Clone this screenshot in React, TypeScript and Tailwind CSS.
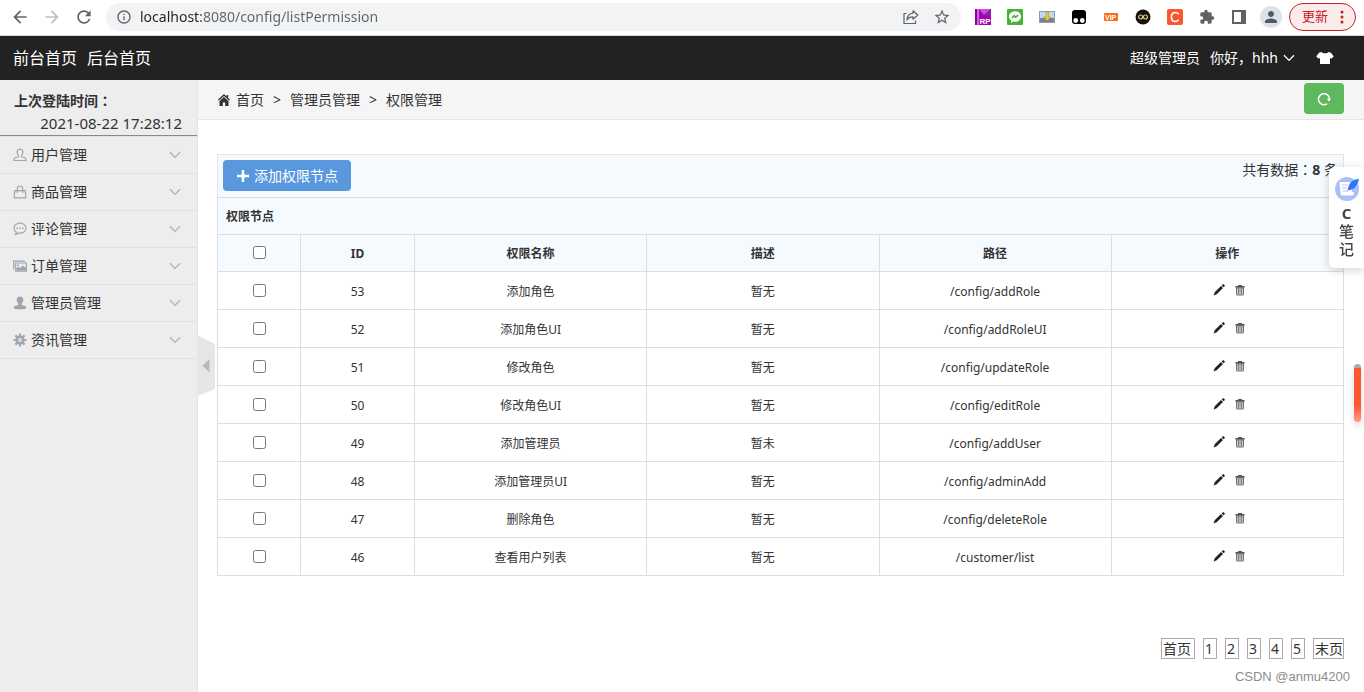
import type { ReactNode } from "react";
import {
  MdArrowBack,
  MdArrowForward,
  MdExtension,
  MdInfoOutline,
  MdPerson,
  MdRefresh,
  MdStarBorder,
} from "react-icons/md";

const permissions = [
  { id: 53, name: "添加角色", note: "暂无", path: "/config/addRole" },
  { id: 52, name: "添加角色UI", note: "暂无", path: "/config/addRoleUI" },
  { id: 51, name: "修改角色", note: "暂无", path: "/config/updateRole" },
  { id: 50, name: "修改角色UI", note: "暂无", path: "/config/editRole" },
  { id: 49, name: "添加管理员", note: "暂未", path: "/config/addUser" },
  { id: 48, name: "添加管理员UI", note: "暂无", path: "/config/adminAdd" },
  { id: 47, name: "删除角色", note: "暂无", path: "/config/deleteRole" },
  { id: 46, name: "查看用户列表", note: "暂无", path: "/customer/list" },
];

function Chevron({ className }: { className: string }) {
  return (
    <svg viewBox="0 0 12 8" className={className} fill="none" stroke="currentColor" strokeWidth="1.3" aria-hidden="true">
      <path d="M1 1.2 6 6.4 11 1.2" />
    </svg>
  );
}

/* Full-width punctuation centred in its em box. */
function Punct({ children }: { children: ReactNode }) {
  return <span className="font-['Noto_Sans_CJK_TC',sans-serif] leading-none">{children}</span>;
}

function MenuIcon({ children }: { children: ReactNode }) {
  return (
    <svg viewBox="0 0 14 14" className="h-3.5 w-3.5 shrink-0 text-[#a0a6b0]" fill="none" stroke="currentColor" strokeWidth="1.2" aria-hidden="true">
      {children}
    </svg>
  );
}

const menu: { label: string; icon: ReactNode }[] = [
  {
    label: "用户管理",
    icon: (
      <MenuIcon>
        <path d="M7 1.2c-1.9 0-2.9 1.3-2.9 3 0 1.3.6 2.6 1.4 3.3v1.2L2 10c-.8.4-1 1.3-1 2.5h12c0-1.2-.2-2.1-1-2.5L8.5 8.7V7.5c.8-.7 1.4-2 1.4-3.3 0-1.7-1-3-2.9-3Z" />
      </MenuIcon>
    ),
  },
  {
    label: "商品管理",
    icon: (
      <MenuIcon>
        <path d="M1.6 5.6h10.8l.4 7.3H1.2Z" />
        <path d="M4.3 8V3.7C4.3 2.1 5.3 1 7 1s2.7 1.1 2.7 2.7V8" />
      </MenuIcon>
    ),
  },
  {
    label: "评论管理",
    icon: (
      <MenuIcon>
        <path d="M7 1.2c3.4 0 6 2.2 6 5s-2.6 5-6 5c-.6 0-1.2-.1-1.7-.2-.8.9-1.7 1.4-2.9 1.5.5-.7.8-1.4.8-2.3C1.8 9.2 1 7.8 1 6.2c0-2.8 2.6-5 6-5Z" />
        <path d="M3.5 6.2H5M6.25 6.2h1.5M9 6.2h1.5" strokeWidth="1.6" />
      </MenuIcon>
    ),
  },
  {
    label: "订单管理",
    icon: (
      <MenuIcon>
        <path d="M.7 10.5V2.1H12" />
        <path d="M2.7 4h10.7v8.2H2.7Z" />
        <path d="M3.3 11.6V9.4l2-1.8L7 8.9l3-2.5L13 9v2.6Z" fill="currentColor" stroke="none" />
        <circle cx="5.1" cy="6.2" r=".9" fill="currentColor" stroke="none" />
      </MenuIcon>
    ),
  },
  {
    label: "管理员管理",
    icon: (
      <MenuIcon>
        <path d="M7 .6C4.8.6 3.7 2 3.7 4c0 1.5.7 3 1.7 3.8v.9L2.1 10c-.9.4-1.3 1.2-1.3 2.2 1.5 1.5 10.9 1.5 12.4 0 0-1-.4-1.8-1.3-2.2L8.6 8.7v-.9c1-.8 1.7-2.300 1.700-3.800C10.300 2 9.200.6 7 .6Z" fill="currentColor" stroke="none" />
      </MenuIcon>
    ),
  },
  {
    label: "资讯管理",
    icon: (
      <MenuIcon>
        <circle cx="7" cy="7" r="3.2" strokeWidth="2.6" />
        <path d="M7 .5v3M7 10.5v3M.5 7h3M10.5 7h3M2.4 2.4l2 2M9.6 9.6l2 2M11.6 2.4l-2 2M4.4 9.6l-2 2" strokeWidth="2.2" />
        <circle cx="7" cy="7" r=".8" fill="currentColor" stroke="none" />
      </MenuIcon>
    ),
  },
];

function Extensions() {
  return (
    <div className="flex items-center gap-4">
      <svg viewBox="0 0 16 16" className="h-4 w-4" role="img" aria-label="RP">
        <path d="M0 0h16v16H0Z" fill="#a800b8" />
        <path d="M4 0h12L9 6Z" fill="#c94fd8" />
        <path d="M16 0v8L9 6Z" fill="#8a1fa8" />
        <path d="M0 0h2v16H0Z" fill="#8b009c" />
        <path d="M2.5 0h1v16h-1Z" fill="#f3d4f7" />
        <text x="4.5" y="14.5" fontSize="8" fontWeight="700" fill="#fff" fontFamily="Liberation Sans, sans-serif">RP</text>
      </svg>
      <svg viewBox="0 0 16 16" className="h-4 w-4" aria-hidden="true">
        <rect width="16" height="16" rx="1" fill="#45b436" />
        <path d="M8 2.2c3.5 0 6 2.3 6 5.3s-2.5 5.3-6 5.3c-.6 0-1.1-.1-1.6-.2L4 14l.3-2.4C2.9 10.7 2 9.2 2 7.5c0-3 2.5-5.3 6-5.3Z" fill="#fff" />
        <path d="m5 8.9 2.2-2.3 1.5 1.7L11 6" fill="none" stroke="#45b436" strokeWidth="1.6" />
      </svg>
      <svg viewBox="0 0 16 16" className="h-4 w-4" aria-hidden="true">
        <path d="M0 2h16v12H0Z" fill="#9a9a9a" />
        <path d="M1 3h14v6H1Z" fill="#b9dcf3" />
        <path d="M1 9h14v4H1Z" fill="#6f8792" />
        <path d="M7 3h2.5v5H12l-3.800 3.800L4.500 8H7Z" fill="#f5c332" stroke="#bd8615" strokeWidth=".5" />
      </svg>
      <svg viewBox="0 0 16 16" className="h-4 w-4" aria-hidden="true">
        <rect x="1" y="1" width="14" height="14" rx="3" fill="#000" />
        <circle cx="4.7" cy="11.5" r="2.4" fill="#fff" />
        <circle cx="11.3" cy="11.5" r="2.4" fill="#fff" />
      </svg>
      <svg viewBox="0 0 16 16" className="h-4 w-4" role="img" aria-label="VIP">
        <rect x="1" y="4" width="14" height="8" rx="1" fill="#ff6a13" />
        <text x="2" y="10.5" fontSize="7" fontWeight="700" fill="#fff" fontFamily="Liberation Sans, sans-serif">VIP</text>
      </svg>
      <svg viewBox="0 0 16 16" className="h-4 w-4" aria-hidden="true">
        <circle cx="8" cy="8" r="7.5" fill="#141210" />
        <circle cx="5.6" cy="8" r="2" fill="none" stroke="#e3c583" strokeWidth="1.2" />
        <circle cx="10.4" cy="8" r="2" fill="none" stroke="#e3c583" strokeWidth="1.2" />
      </svg>
      <svg viewBox="0 0 16 16" className="h-4 w-4" aria-hidden="true">
        <rect width="16" height="16" rx="2" fill="#fc5531" />
        <path d="M11.7 5.2C10.9 4 9.8 3.5 8.5 3.5 6 3.5 4.4 5.3 4.4 8s1.5 4.5 4 4.5c1.4 0 2.5-.6 3.200-1.700" fill="none" stroke="#fff" strokeWidth="1.6" />
      </svg>
      <MdExtension className="h-4 w-4 text-[#5f6368]" aria-hidden="true" />
      <svg viewBox="0 0 16 16" className="h-4 w-4" aria-hidden="true">
        <path d="M1 1h14v14H1Zm2 2v10h7V3Z" fill="#5f6368" fillRule="evenodd" />
      </svg>
    </div>
  );
}

function BrowserBar() {
  return (
    <div className="flex h-9 items-center border-b border-[#d5d6d8] bg-white pr-2 pb-0.5 pl-2.5 text-[#5f6368]">
      <div className="flex gap-3">
        <button type="button" aria-label="后退"><MdArrowBack className="h-5 w-5" /></button>
        <button type="button" aria-label="前进" className="text-[#bcbec1]"><MdArrowForward className="h-5 w-5" /></button>
        <button type="button" aria-label="重新加载"><MdRefresh className="h-5 w-5" /></button>
      </div>
      <div className="mr-3.5 ml-3 flex h-7 flex-1 items-center rounded-full bg-[#f1f3f4] pr-2.5 pl-2.5">
        <MdInfoOutline className="h-4 w-4 shrink-0" aria-hidden="true" />
        <input
          aria-label="地址"
          defaultValue="localhost:8080/config/listPermission"
          className="ml-2 min-w-0 flex-1 bg-[linear-gradient(90deg,#202124_61px,#5f6368_61px)] bg-clip-text text-sm text-transparent outline-none"
        />
        <button type="button" aria-label="分享">
          <svg viewBox="0 0 16 16" className="h-4 w-4" fill="none" stroke="currentColor" strokeWidth="1.2">
            <path d="M3.5 4.5H1v10h11.500v-3" />
            <path d="M10 1.800 14.800 6 10 10.200V7.800C7 7.800 5.200 8.800 3.900 11 4.200 7.500 6.300 4.600 10 4.200Z" strokeLinejoin="round" />
          </svg>
        </button>
        <button type="button" aria-label="收藏" className="ml-3.5"><MdStarBorder className="h-[18px] w-[18px]" /></button>
      </div>
      <Extensions />
      <span className="ml-[13px] flex h-[22px] w-[22px] items-center justify-center rounded-full bg-[#dee1e6] text-[#4b5a73]">
        <MdPerson className="h-[18px] w-[18px]" />
      </span>
      <button type="button" className="ml-[7px] flex h-7 items-center gap-3 rounded-full border border-[#c5221f] bg-[#fcebeb] pr-[11px] pl-3 text-[13px] text-[#c5221f]">
        更新
        <svg viewBox="0 0 4 14" className="h-3.5 w-1" fill="currentColor" aria-hidden="true">
          <circle cx="2" cy="2" r="1.5" />
          <circle cx="2" cy="7" r="1.5" />
          <circle cx="2" cy="12" r="1.5" />
        </svg>
      </button>
    </div>
  );
}

function TopNav() {
  return (
    <header className="flex h-11 items-center justify-between bg-[#222] pr-[30px] pl-[13px] text-white">
      <nav className="flex gap-2.5 text-base">
        <a href="#front">前台首页</a>
        <a href="#admin">后台首页</a>
      </nav>
      <div className="flex items-center text-sm">
        <span>超级管理员</span>
        <button type="button" className="ml-2.5 flex items-center gap-[5px]">
          <span>你好，hhh</span>
          <Chevron className="h-2 w-3" />
        </button>
        <button type="button" aria-label="换肤" className="ml-[21px]">
          <svg viewBox="0 0 18 14" className="h-3.5 w-[18px]" fill="currentColor">
            <path d="M5.5 1c1 1.7 6 1.7 7 0L15 1.8l2.8 3.7-2.6 2.300-1.200-1V13H4V6.800l-1.200 1L.2 5.500 3 1.800Z" />
          </svg>
        </button>
      </div>
    </header>
  );
}

function Sidebar() {
  return (
    <aside className="relative w-[198px] shrink-0 border-r border-[#e3e3e3] bg-[#ededed] text-sm text-[#333]">
      <div className="border-b border-[#888] pt-2.5 pr-[15px] pb-px pl-3.5 leading-[22px]">
        <p className="font-bold">上次登陆时间<Punct>：</Punct></p>
        <p className="text-right text-[15px] leading-[22px]">2021-08-22 17:28:12</p>
      </div>
      <ul className="border-t border-[#e3e3e3]">
        {menu.map((item) => (
          <li key={item.label} className="border-b border-[#e0e0e0]">
            <button type="button" className="flex h-9 w-full items-center pr-4 pl-[13px] text-left">
              {item.icon}
              <span className="ml-1 flex-1">{item.label}</span>
              <Chevron className="h-2 w-3 text-[#b0b2b6]" />
            </button>
          </li>
        ))}
      </ul>
      <button type="button" aria-label="收起菜单" className="absolute top-[255px] left-[197px]">
        <svg viewBox="0 0 18 62" className="h-[62px] w-[18px]">
          <path d="M0 0 16 8q2 1 2 3v41q0 2-2 3L0 61Z" fill="#e6e6e6" />
          <path d="M12.500 24v13.500L5.500 30.800Z" fill="#b9b9b9" />
        </svg>
      </button>
    </aside>
  );
}

function Breadcrumb() {
  return (
    <div className="flex h-10 items-center justify-between border-b border-[#e5e5e5] bg-[#f5f5f5] pr-5 pl-5 text-sm text-[#333]">
      <nav className="flex items-center">
        <svg viewBox="0 0 12 12" className="mr-1.5 h-3 w-3" fill="currentColor" aria-hidden="true">
          <path d="M6 0 0 5.600l.9.9L6 1.900l5.100 4.600.9-.9-1.800-1.700V1H8.600v1.400Z" />
          <path d="M6 3.100 1.500 7.100V12h3.300V8.500h2.400V12h3.300V7.100Z" />
        </svg>
        <a href="#home">首页</a>
        <span className="mx-[9px]">&gt;</span>
        <span>管理员管理</span>
        <span className="mx-[9px]">&gt;</span>
        <span>权限管理</span>
      </nav>
      <button type="button" aria-label="刷新" className="mb-0.5 flex h-[31px] w-10 items-center justify-center rounded bg-[#5eb95e] text-white">
        <svg viewBox="0 0 14 14" className="h-3.5 w-3.5" fill="none" stroke="currentColor" strokeWidth="1.5">
          <path d="M10 11.800A5.500 5.500 0 1 1 12.500 7.200" />
          <path d="M9.800 6.800h4.200L12 9.600Z" fill="currentColor" stroke="none" />
        </svg>
      </button>
    </div>
  );
}

function PermissionTable() {
  return (
    <table className="w-full table-fixed border-collapse text-center text-xs text-[#333] [&_td]:border [&_td]:border-[#ddd] [&_td]:pt-0.5 [&_th]:border [&_th]:border-[#ddd] [&_th]:pt-0.5">
      <colgroup>
        <col className="w-[83px]" />
        <col className="w-[114px]" />
        <col />
        <col />
        <col />
        <col />
      </colgroup>
      <thead className="bg-[#f5fafe]">
        <tr className="h-[37px]">
          <th colSpan={6} className="px-2 text-left">权限节点</th>
        </tr>
        <tr className="h-[37px]">
          <th className="pb-1"><input type="checkbox" aria-label="全选" className="h-[13px] w-[13px] align-middle" /></th>
          <th>ID</th>
          <th>权限名称</th>
          <th>描述</th>
          <th>路径</th>
          <th>操作</th>
        </tr>
      </thead>
      <tbody>
        {permissions.map((row) => (
          <tr key={row.id} className="h-[38px]">
            <td className="pb-1"><input type="checkbox" aria-label={`选择 ${row.id}`} className="h-[13px] w-[13px] align-middle" /></td>
            <td>{row.id}</td>
            <td>{row.name}</td>
            <td>{row.note}</td>
            <td>{row.path}</td>
            <td>
              <div className="flex items-center justify-center gap-[9px] pb-1 pl-[5px]">
                <button type="button" aria-label={`编辑 ${row.name}`}>
                  <svg viewBox="0 0 12 12" className="h-3 w-3" fill="#222">
                    <path d="m8 2.100 2 1.900-6.300 6.300L.6 11.400l1.100-3.100ZM8.700 1.400l.9-.9c.4-.4.900-.4 1.300 0l.6.600c.4.400.4.900 0 1.300l-.9.900Z" />
                  </svg>
                </button>
                <button type="button" aria-label={`删除 ${row.name}`}>
                  <svg viewBox="0 0 12 12" className="h-3 w-3">
                    <path d="M4 1h4v1h2.500v1.700h-9V2H4Z" fill="#555" />
                    <path d="M2.500 4h7v6.500q0 .5-.5.500H3q-.5 0-.5-.5Z" fill="#c4c4cc" stroke="#666" strokeWidth=".9" />
                    <path d="M4.700 4.800v5M7.300 4.800v5" stroke="#666" strokeWidth=".9" />
                  </svg>
                </button>
              </div>
            </td>
          </tr>
        ))}
      </tbody>
    </table>
  );
}

function Pager() {
  return (
    <nav aria-label="分页" className="mt-[62px] flex justify-end gap-2 text-sm leading-[19px] text-[#333]">
      {["首页", "1", "2", "3", "4", "5", "末页"].map((label) => (
        <a key={label} href={`#page-${label}`} className="border border-[#b0a8ac] pr-[3px] pl-px last:pr-0">
          {label}
        </a>
      ))}
    </nav>
  );
}

function NotesWidget() {
  return (
    <button type="button" className="fixed top-[167px] right-0 flex w-[35px] flex-col items-center rounded-l-md bg-white pt-2.5 pb-2.5 text-[15px] leading-[18px] font-medium text-[#444] shadow-[0_2px_10px_rgba(0,0,0,0.18)]">
      <svg viewBox="0 0 24 24" className="mb-[3px] h-6 w-6" aria-hidden="true">
        <circle cx="12" cy="12" r="12" fill="#a9c1f8" />
        <path d="M4.500 5h11l1.500 10 2 .5q0 3-2 3H7q-1.500-.5-1.500-3Z" fill="#fff" />
        <path d="M7 8h6M7.300 11h5M7.700 14h5" stroke="#b7c9f5" strokeWidth="1" />
        <path d="M24 2c-6 .3-10.500 3.500-11.200 11.200C18 13.200 22.500 9.500 24 2Z" fill="#287cf5" />
        <path d="m12.500 13.500 6-6.500" stroke="#7654ff" strokeWidth="1" />
      </svg>
      <span className="font-bold">C</span>
      <span>笔</span>
      <span>记</span>
    </button>
  );
}

export default function App() {
  return (
    <div className="flex min-h-screen flex-col bg-white font-['Noto_Sans','Noto_Sans_CJK_SC',sans-serif]">
      <BrowserBar />
      <TopNav />
      <div className="flex flex-1">
        <Sidebar />
        <div className="flex min-w-0 flex-1 flex-col">
          <Breadcrumb />
          <main className="pt-[34px] pr-5 pl-[19px]">
            <div className="flex items-start justify-between border border-b-0 border-[#e5e5e5] bg-[#f5fafe] px-[5px] pt-[5px] pb-1.5 text-sm text-[#333]">
              <button type="button" className="flex h-[31px] items-center gap-1 rounded bg-[#5a98de] px-[13px] text-white">
                <svg viewBox="0 0 14 14" className="h-3.5 w-3.5" stroke="currentColor" strokeWidth="2.6" aria-hidden="true">
                  <path d="M7 1v12M1 7h12" />
                </svg>
                添加权限节点
              </button>
              <p>共有数据<Punct>：</Punct><strong>8</strong> 条</p>
            </div>
            <PermissionTable />
            <Pager />
          </main>
          <p className="mt-2 pr-3.5 text-right font-['Liberation_Sans',sans-serif] text-[13px] text-[#8c8c8c]">CSDN @anmu4200</p>
        </div>
      </div>
      <NotesWidget />
      <div className="fixed top-[364px] right-[3px] h-[58px] w-[7px] rounded-full border-t-4 border-[#aaa] bg-gradient-to-b from-[#fc5531] from-70% to-[#ff9a86] shadow-[0_4px_6px_rgba(0,0,0,0.15)]" />
    </div>
  );
}
